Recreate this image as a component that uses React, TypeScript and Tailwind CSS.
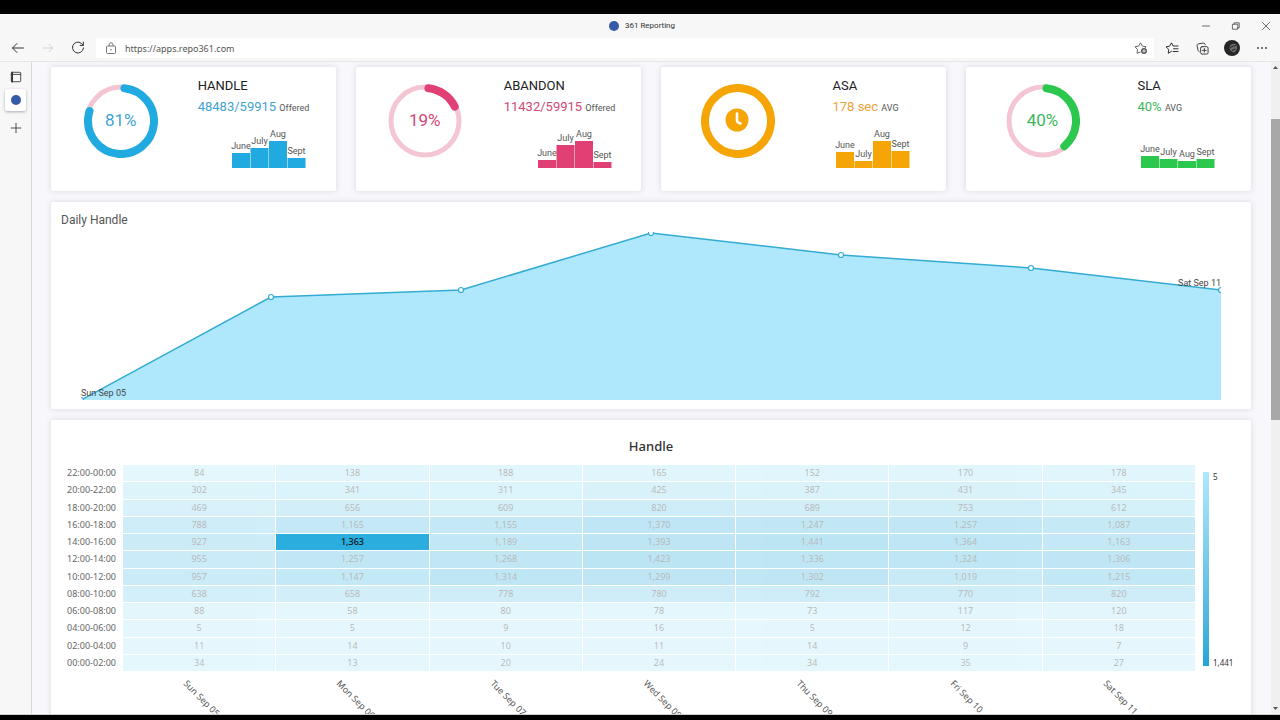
import type { ReactNode } from "react";

type Metric = {
  title: string;
  value: string;
  suffix: string;
  percent: number;
  color: string;
  textClass: string;
  gapClass: string;
  clock?: boolean;
  bars: number[];
};

const months = ["June", "July", "Aug", "Sept"];

const metrics: Metric[] = [
  { title: "HANDLE", value: "48483/59915", suffix: "Offered", percent: 81, color: "#20aadf", textClass: "text-[#3fa3d0]", gapClass: "gap-10", bars: [15, 20, 27, 10] },
  { title: "ABANDON", value: "11432/59915", suffix: "Offered", percent: 19, color: "#e04074", textClass: "text-[#d04a78]", gapClass: "gap-[42px]", bars: [8, 23, 27, 6] },
  { title: "ASA", value: "178 sec", suffix: "AVG", percent: 100, color: "#f5a506", textClass: "text-[#eda23a]", gapClass: "gap-[58px]", clock: true, bars: [16, 7, 27, 17] },
  { title: "SLA", value: "40%", suffix: "AVG", percent: 40, color: "#2cc84d", textClass: "text-[#3fb65c]", gapClass: "gap-[58px]", bars: [12, 9, 7, 9] },
];

const days = ["Sun Sep 05", "Mon Sep 06", "Tue Sep 07", "Wed Sep 08", "Thu Sep 09", "Fri Sep 10", "Sat Sep 11"];

const heat: { slot: string; values: number[] }[] = [
  { slot: "22:00-00:00", values: [84, 138, 188, 165, 152, 170, 178] },
  { slot: "20:00-22:00", values: [302, 341, 311, 425, 387, 431, 345] },
  { slot: "18:00-20:00", values: [469, 656, 609, 820, 689, 753, 612] },
  { slot: "16:00-18:00", values: [788, 1165, 1155, 1370, 1247, 1257, 1087] },
  { slot: "14:00-16:00", values: [927, 1363, 1189, 1393, 1441, 1364, 1163] },
  { slot: "12:00-14:00", values: [955, 1257, 1268, 1423, 1336, 1324, 1306] },
  { slot: "10:00-12:00", values: [957, 1147, 1314, 1299, 1302, 1019, 1215] },
  { slot: "08:00-10:00", values: [638, 658, 778, 780, 792, 770, 820] },
  { slot: "06:00-08:00", values: [88, 58, 80, 78, 73, 117, 120] },
  { slot: "04:00-06:00", values: [5, 5, 9, 16, 5, 12, 18] },
  { slot: "02:00-04:00", values: [11, 14, 10, 11, 14, 9, 7] },
  { slot: "00:00-02:00", values: [34, 13, 20, 24, 34, 35, 27] },
];

const MIN = 5;
const MAX = 1441;
const low = [172, 232, 250];
const high = [36, 170, 220];

function heatColor(v: number) {
  const t = (v - MIN) / (MAX - MIN);
  return `rgb(${low.map((c, i) => Math.round(c + (high[i] - c) * t)).join(",")})`;
}

const cardClass = "rounded-xs bg-white shadow-[0_0_5px_1px_rgba(70,70,90,0.13)]";

function Icon({ label, size = 14, className = "", children }: { label: string; size?: number; className?: string; children: ReactNode }) {
  return (
    <button type="button" aria-label={label} className={`flex h-5 w-5 items-center justify-center text-[#333] ${className}`}>
      <svg width={size} height={size} viewBox="0 0 14 14" fill="none" stroke="currentColor" strokeWidth="1" strokeLinecap="round" strokeLinejoin="round" aria-hidden="true">
        {children}
      </svg>
    </button>
  );
}

function TitleBar() {
  return (
    <div className="grid h-6 grid-cols-[1fr_auto_1fr] items-center">
      <div />
      <div className="flex items-center gap-1.5 pl-1 font-[Roboto,sans-serif] text-[8px] leading-3 text-[#333]">
        <span className="h-2.5 w-2.5 rounded-full bg-[#355ba8]" />
        361 Reporting
      </div>
      <div className="flex items-center justify-end gap-[10px] pr-1">
        <Icon label="Minimize" size={10}><path d="M2 7h10" /></Icon>
        <Icon label="Restore" size={10}>
          <path d="M2.5 4.5h7v7h-7zM4.500 4.500V2.500H11.500V9.500H9.500" />
        </Icon>
        <Icon label="Close" size={10}><path d="M2 2l10 10M12 2L2 12" /></Icon>
      </div>
    </div>
  );
}

function Toolbar() {
  return (
    <div className="flex h-[23px] items-start pr-2 pl-2">
      <div className="flex gap-[10px] pr-2">
        <Icon label="Back"><path d="M12.500 7H1.500M6 2.500L1.500 7L6 11.500" /></Icon>
        <Icon label="Forward" className="text-[#cfcfcf]" size={12}><path d="M1.500 7H12.500M8 2.500L12.500 7L8 11.500" /></Icon>
        <Icon label="Refresh"><path d="M12 4.200A5.500 5.500 0 1 0 12.500 7M12.300 1.200V4.400H9.200" /></Icon>
      </div>
      <div className="flex h-5 flex-1 items-center rounded-xs bg-white pr-[3px] pl-[9px]">
        <svg width="12" height="12" viewBox="0 0 12 12" fill="none" stroke="#777" aria-hidden="true">
          <rect x="1.500" y="4" width="9" height="7.500" rx="1" />
          <path d="M4 4V2.800a2 2 0 0 1 4 0V4" />
          <circle cx="6" cy="7.700" r=".8" fill="#777" stroke="none" />
        </svg>
        <input
          aria-label="Address"
          defaultValue="https://apps.repo361.com"
          className="ml-2 h-5 min-w-0 flex-1 bg-transparent text-[9px] text-[#555] outline-none"
        />
        <Icon label="Add to favorites" className="text-[#666]">
          <path d="M6.200 11L3 12.300L3.500 8.500L1 5.800L4.600 5.100L6.500 1.800L8.400 5.100L12 5.800L11 7" />
          <circle cx="10" cy="10" r="3" fill="#555" stroke="none" />
          <path d="M10 8.500v3M8.500 10h3" stroke="#fff" strokeWidth=".8" />
        </Icon>
      </div>
      <div className="flex items-center gap-[10px] pl-2">
        <Icon label="Favorites">
          <path d="M6.500 10.300L3.200 12.300L3.800 8.500L1 5.800L4.600 5.200L6.500 1.800L8 4.800M8.500 5h4.500M8.500 7.800h4.500M8 10.500h5" />
        </Icon>
        <Icon label="Collections" size={13}>
          <rect x="5" y="5" width="8" height="8" rx="1.500" />
          <path d="M9 7v4M7 9h4M3.500 10.500C2.500 10 2.200 9 2 8L1.200 4.200C1 3 1.500 2.300 2.500 2L7.500 1.200C9 1 9.800 1.800 10 3" />
        </Icon>
        <button type="button" aria-label="Profile" className="flex h-5 w-5 items-center justify-center">
          <svg width="16" height="16" viewBox="0 0 16 16" aria-hidden="true">
            <circle cx="8" cy="8" r="8" fill="#262626" />
            <path d="M5.500 7C6 3.500 11.500 2.500 13 5.500C13.500 8.500 12 12 10 12.500C7.500 12.500 5.500 9.500 5.500 7Z" fill="#6a6a6a" />
            <path d="M6 7.500L12.500 5M8 10.500l3.500-1.500" stroke="#222" strokeWidth="1" />
          </svg>
        </button>
        <Icon label="More">
          <g fill="currentColor" stroke="none">
            <circle cx="3" cy="7" r=".9" />
            <circle cx="7" cy="7" r=".9" />
            <circle cx="11" cy="7" r=".9" />
          </g>
        </Icon>
      </div>
    </div>
  );
}

function TabRail() {
  return (
    <nav aria-label="Tabs" className="flex w-8 shrink-0 flex-col items-center border-r border-[#d9d9dc] bg-[#f7f7f7] pt-[5px]">
      <Icon label="Vertical tabs" size={12}>
        <rect x="1.500" y="1.500" width="11" height="11" rx="1" />
        <path d="M1.500 4h11" />
        <path d="M2.500 2v10.500" strokeWidth="2" />
      </Icon>
      <button type="button" aria-label="361 Reporting" className="mt-0.5 flex h-[22px] w-[21px] items-center justify-center rounded-xs bg-white shadow-[0_1px_3px_rgba(0,0,0,0.3)]">
        <span className="h-2.5 w-2.5 rounded-full bg-[#355ba8]" />
      </button>
      <Icon label="New tab" size={12} className="mt-[7px]"><path d="M7 1.500v11M1.500 7h11" /></Icon>
    </nav>
  );
}

function Donut({ metric }: { metric: Metric }) {
  const r = 33;
  const c = 2 * Math.PI * r;
  // leave room for the round caps
  const arc = metric.percent === 100 ? c : (c * metric.percent) / 100 - 6;
  return (
    <div className="relative mt-[7px] h-[74px] w-[74px] shrink-0">
      <svg viewBox="0 0 74 74" className="h-full w-full" fill="none" aria-hidden="true">
        <circle cx="37" cy="37" r="34" stroke="#f4c6d3" strokeWidth="5" />
        <circle
          cx="37"
          cy="37"
          r={r}
          stroke={metric.color}
          strokeWidth="8"
          strokeLinecap="round"
          strokeDasharray={`${arc} ${c}`}
          transform="rotate(-84 37 37)"
        />
        {metric.clock && (
          <>
            <circle cx="36" cy="36" r="11.500" fill={metric.color} />
            <path d="M36 29.500V36.500Q36 38.500 39.500 39.500" stroke="#fff" strokeWidth="2.600" strokeLinecap="round" />
          </>
        )}
      </svg>
      {!metric.clock && (
        <span className={`absolute inset-0 flex items-center justify-center text-[17px] ${metric.textClass}`}>{metric.percent}%</span>
      )}
    </div>
  );
}

function MonthBars({ bars, color }: { bars: number[]; color: string }) {
  return (
    <svg width="80" height="49" viewBox="0 0 80 49" role="img" aria-label="Last four months">
      {bars.map((h, i) => (
        <g key={months[i]}>
          <rect x={3 + i * 18.500} y={49 - h} width="18" height={h} fill={color} />
          <text x={12 + i * 18.500} y={49 - h - 4} textAnchor="middle" className="fill-[#555] text-[9px]">{months[i]}</text>
        </g>
      ))}
    </svg>
  );
}

function MetricCard({ metric }: { metric: Metric }) {
  return (
    <section className={`flex items-start justify-center pt-[10px] pb-[23px] pl-1.5 ${metric.gapClass} ${cardClass}`}>
      <Donut metric={metric} />
      <div className="flex flex-col">
        <h2 className="text-[13px] leading-[18px] text-[#222]">{metric.title}</h2>
        <p className={`text-[13px] leading-6 whitespace-nowrap ${metric.textClass}`}>
          {metric.value} <span className="text-[9px] leading-none text-[#555]">{metric.suffix}</span>
        </p>
        <div className="flex justify-end">
          <MonthBars bars={metric.bars} color={metric.color} />
        </div>
      </div>
    </section>
  );
}

function DailyHandle() {
  const points = [[0, 168], [190, 65], [380, 58], [570, 1], [760, 23], [950, 36], [1140, 58]];
  const line = points.map((p) => p.join(",")).join(" ");
  return (
    <section className={`pt-2 pb-[9px] ${cardClass}`}>
      <h2 className="pl-[10px] text-xs leading-5 text-[#555]">Daily Handle</h2>
      <div className="mt-0.5 px-[30px]">
        <svg viewBox="0 0 1140 168" className="block h-auto w-full" role="img" aria-label="Daily Handle">
          <polygon points={`${line} 1140,168`} fill="#afe8fd" />
          <polyline points={line} fill="none" stroke="#33abd2" strokeWidth="1.500" />
          {points.map(([x, y]) => (
            <circle key={x} cx={x} cy={y} r="2.500" fill="#fff" stroke="#33abd2" strokeWidth="1.200" />
          ))}
          <text x="0" y="164" className="fill-[#444] text-[9px]">Sun Sep 05</text>
          <text x="1140" y="54" textAnchor="end" className="fill-[#444] text-[9px]">Sat Sep 11</text>
        </svg>
      </div>
    </section>
  );
}

function HeatMap() {
  return (
    <section className={`pt-4 font-['Noto_Sans','Open_Sans',sans-serif] ${cardClass}`}>
      <h2 className="text-center text-[13px] leading-5 font-medium text-[#333]">Handle</h2>
      <div className="mt-2 flex pl-[10px]">
        <div className="min-w-0 flex-1">
          <table className="h-[209px] w-full table-fixed border-separate border-spacing-px text-[9px] leading-3">
            <colgroup>
              <col className="w-[60px]" />
              {days.map((d) => <col key={d} />)}
            </colgroup>
            <tbody>
              {heat.map((row) => (
                <tr key={row.slot}>
                  <th scope="row" className="p-0 pr-1.5 text-right font-normal whitespace-nowrap text-[#666]">{row.slot}</th>
                  {row.values.map((v, i) => {
                    const active = row.slot === "14:00-16:00" && i === 1;
                    return (
                      <td
                        key={days[i]}
                        className={`p-0 text-center text-[#111] ${active ? "font-medium" : "opacity-30"}`}
                        style={{ backgroundColor: heatColor(v) }}
                      >
                        {v.toLocaleString("en-US")}
                      </td>
                    );
                  })}
                </tr>
              ))}
            </tbody>
            <tfoot>
              <tr>
                <td className="p-0" />
                {days.map((d) => (
                  <th key={d} scope="col" className="h-0 p-0 font-normal text-[#555]">
                    <div className="relative h-0">
                      <span className="absolute top-1 left-1/2 -ml-3.5 origin-left rotate-45 whitespace-nowrap">{d}</span>
                    </div>
                  </th>
                ))}
              </tr>
            </tfoot>
          </table>
        </div>
        <div className="flex w-[55px] gap-1 pt-2 pb-1.5 pl-[7px] text-[8px] leading-[9px] text-[#333]">
          <div className="h-[194px] w-1.5 bg-linear-to-b from-[#ade9fb] to-[#20a6d8]" />
          <div className="flex h-[195px] flex-col justify-between">
            <span>5</span>
            <span>1,441</span>
          </div>
        </div>
      </div>
      <div className="h-20" />
    </section>
  );
}

function ScrollTrack() {
  return (
    <div aria-hidden="true" className="flex w-[9px] shrink-0 flex-col items-center bg-[#f0f0f0] pt-1">
      <svg width="5" height="3" viewBox="0 0 5 3" fill="#555"><path d="M0 3L2.500 0L5 3z" /></svg>
      <div className="mt-[50px] h-[301px] w-full bg-[#a8a8a8]" />
      <svg className="mt-auto mb-1" width="5" height="3" viewBox="0 0 5 3" fill="#555"><path d="M0 0L2.500 3L5 0z" /></svg>
    </div>
  );
}

export default function App() {
  return (
    <div className="flex h-screen flex-col overflow-hidden bg-black pt-[14px] pb-[5px] font-['Noto_Sans','Open_Sans',sans-serif]">
      <header className="shrink-0 border-b border-[#e6e6e6] bg-[#f7f7f7]">
        <TitleBar />
        <Toolbar />
      </header>
      <div className="flex min-h-0 flex-1 border-b border-[#cfcfcf]">
        <TabRail />
        <main className="flex min-w-0 flex-1 flex-col gap-[11px] overflow-hidden bg-[#f8f8fc] pt-[5px] pr-5 pl-[19px] font-[Roboto,sans-serif]">
          <div className="grid shrink-0 grid-cols-4 gap-5">
            {metrics.map((m) => <MetricCard key={m.title} metric={m} />)}
          </div>
          <div className="shrink-0"><DailyHandle /></div>
          <div className="shrink-0"><HeatMap /></div>
        </main>
        <ScrollTrack />
      </div>
    </div>
  );
}
